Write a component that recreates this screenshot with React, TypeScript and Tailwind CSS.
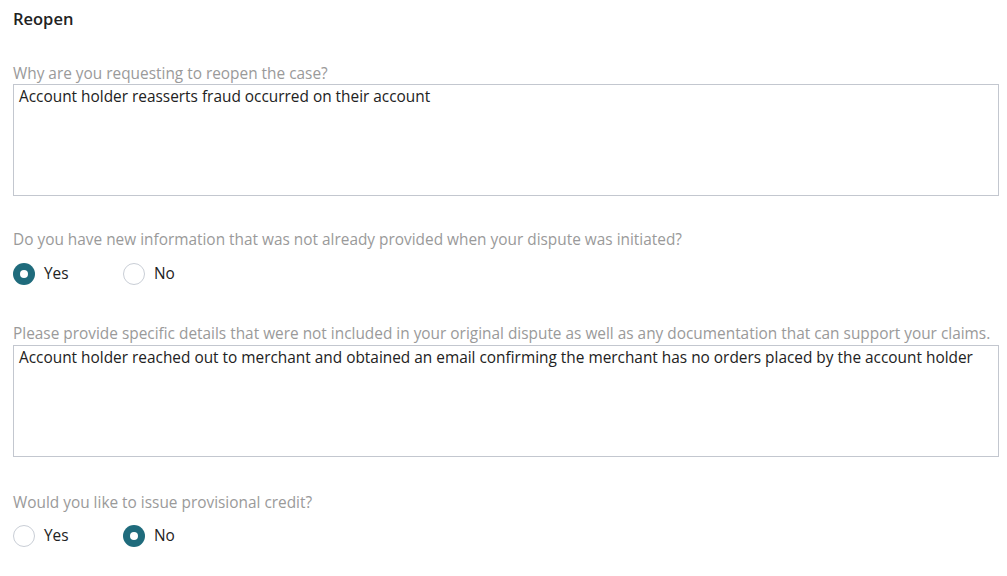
import React from "react";

function Radio({ checked, label }: { checked: boolean; label: string }) {
  return (
    <label className="flex items-center gap-[9px] w-[110px]">
      {checked ? (
        <span className="w-[22px] h-[22px] rounded-full bg-[#1f6b7c] flex items-center justify-center">
          <span className="w-[8px] h-[8px] rounded-full bg-white" />
        </span>
      ) : (
        <span className="w-[22px] h-[22px] rounded-full border border-[#c9ced6] bg-white" />
      )}
      <span className="text-[15.4px] leading-[20px] text-[#222]">{label}</span>
    </label>
  );
}

function Field({ label, value, tall }: { label: string; value: string; tall?: boolean }) {
  return (
    <div className="flex flex-col">
      <div className={`text-[15.4px] text-[#9a9a9a] leading-[20px] ${tall ? "h-[21px]" : "h-[20px]"}`}>{label}</div>
      <div className="h-[112px] border border-[#c3c7cf] px-[5px] pt-[2px] text-[15.4px] leading-[20px] text-[#222]">
        {value}
      </div>
    </div>
  );
}

export default function App() {
  return (
    <div
      className="w-[1007px] h-[576px] bg-white pl-[13px] pr-[8px]"
      style={{ fontFamily: '"Open Sans", sans-serif' }}
    >
      <div className="pt-[8px] text-[16.5px] font-semibold text-[#222] leading-[22px]">Reopen</div>
      <div className="mt-[34px]">
        <Field
          label="Why are you requesting to reopen the case?"
          value="Account holder reasserts fraud occurred on their account"
        />
      </div>
      <div className="mt-[34px] text-[15.4px] text-[#9a9a9a] leading-[20px]">
        Do you have new information that was not already provided when your dispute was initiated?
      </div>
      <div className="mt-[13px] flex">
        <Radio checked label="Yes" />
        <Radio checked={false} label="No" />
      </div>
      <div className="mt-[39px]">
        <Field
          tall
          label="Please provide specific details that were not included in your original dispute as well as any documentation that can support your claims."
          value="Account holder reached out to merchant and obtained an email confirming the merchant has no orders placed by the account holder"
        />
      </div>
      <div className="mt-[36px] text-[15.4px] text-[#9a9a9a] leading-[20px]">
        Would you like to issue provisional credit?
      </div>
      <div className="mt-[12px] flex">
        <Radio checked={false} label="Yes" />
        <Radio checked label="No" />
      </div>
    </div>
  );
}
